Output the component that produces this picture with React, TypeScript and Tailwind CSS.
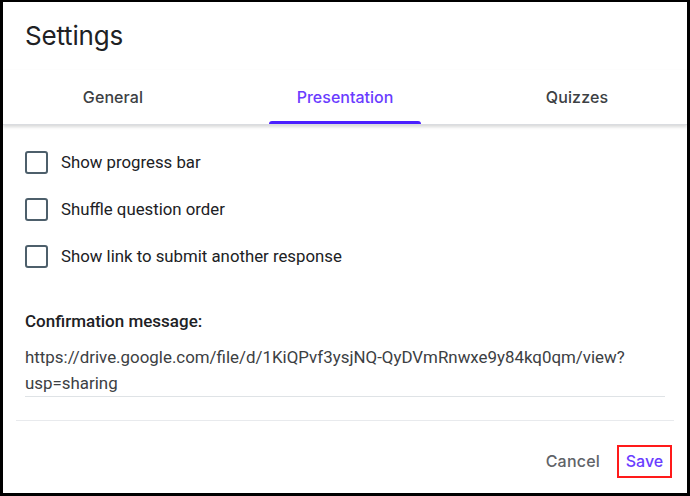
export default function App() {
  const options = [
    "Show progress bar",
    "Shuffle question order",
    "Show link to submit another response",
  ];
  const tabs = ["General", "Presentation", "Quizzes"];

  return (
    <div className="w-[690px] h-[496px] bg-white border-[3px] border-t-[2px] border-black flex flex-col font-['Roboto',sans-serif] overflow-hidden">
      <div className="h-[68px] flex items-center pl-[22px]">
        <h1 className="text-[26px] leading-none text-[#202124] font-['Inter',sans-serif] tracking-[-0.2px]">
          Settings
        </h1>
      </div>

      <div className="h-[55px] grid grid-cols-[220px_1fr_220px] shadow-[0_2px_3px_rgba(60,64,67,0.2)] border-b border-[#dadce0] relative z-10">
        {tabs.map((t, i) => (
          <div key={t} className="flex items-center justify-center relative">
            <span
              className={
                i === 1
                  ? "text-[16px] font-medium text-[#6a3cff] font-['Inter',sans-serif]"
                  : "text-[16px] font-medium text-[#3c4043] font-['Inter',sans-serif] tracking-[0.1px]"
              }
            >
              {t}
            </span>
            {i === 1 && (
              <div className="absolute bottom-0 left-1/2 -translate-x-1/2 w-[152px] h-[3px] rounded-t-[3px] bg-[#4a1fff]" />
            )}
          </div>
        ))}
      </div>

      <div className="px-[22px] pt-[14px]">
        {options.map((o) => (
          <div key={o} className="h-[47px] flex items-center gap-[13px]">
            <div className="w-[23px] h-[23px] rounded-[3px] border-2 border-[#4d5f6b]" />
            <span className="text-[16.8px] text-[#202124]">{o}</span>
          </div>
        ))}

        <div className="mt-[29px] text-[17px] leading-[24px] font-medium text-[#202124]">
          Confirmation message:
        </div>
        <div className="mt-[11px] text-[16.9px] leading-[26px] text-[#3c4043] border-b border-[#dfe3e6]">
          https://drive.google.com/file/d/1KiQPvf3ysjNQ-QyDVmRnwxe9y84kq0qm/view?
          <br />
          usp=sharing
        </div>
      </div>

      <div className="mx-[13px] mt-[23px] border-t border-[#e8eaed]" />

      <div className="flex-1 flex items-center justify-end pr-[15px] pt-[8px] gap-[17px]">
        <button className="text-[16px] font-medium text-[#5f6368] font-['Inter',sans-serif] tracking-[0.2px]">
          Cancel
        </button>
        <button className="w-[55px] h-[33px] border-2 border-[#ff1a1a] flex items-center justify-center text-[16px] font-medium text-[#6a3cff] font-['Inter',sans-serif]">
          Save
        </button>
      </div>
    </div>
  );
}
